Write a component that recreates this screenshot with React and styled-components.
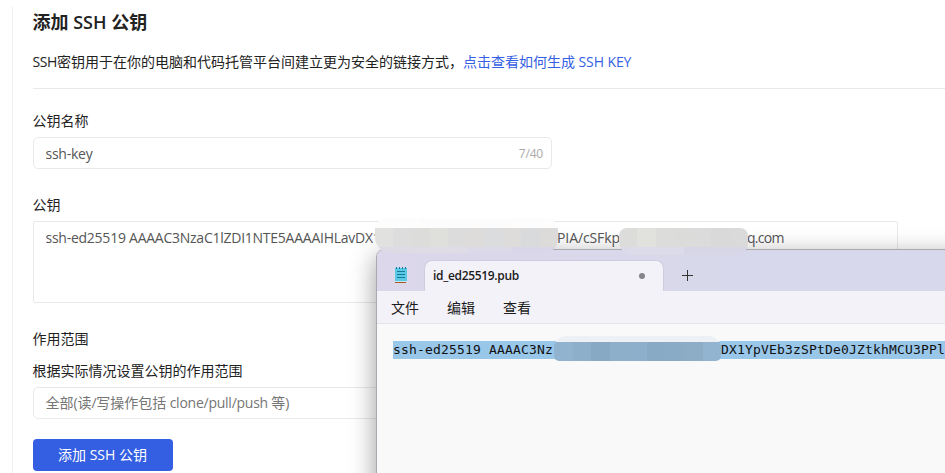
import React from 'react';
import styled, { createGlobalStyle } from 'styled-components';

const Global = createGlobalStyle`
  * { box-sizing: border-box; }
  body { margin: 0; background: #fff; overflow: hidden; }
`;
const Page = styled.div`
  position: relative;
  width: 945px;
  height: 473px;
  overflow: hidden;
  background: #fff;
  padding: 6px 0 0 12px;
  font: 14px/20px 'Open Sans', 'Noto Sans CJK SC', sans-serif;
  color: #222;
`;
const Settings = styled.main`
  height: 467px;
  border-left: 1px solid #f0f0f2;
  padding-left: 20px;
  display: flex;
  flex-direction: column;
  align-items: flex-start;
`;
const Latin = styled.span`
  font-family: 'Open Sans', sans-serif;
  font-size: ${(p) => p.$size || 14}px;
  letter-spacing: ${(p) => p.$gap ?? -0.25}px;
  font-weight: ${(p) => p.$weight || 'inherit'};
  white-space: pre;
`;
const Title = styled.h1`
  margin: 3px 0 0 -0.5px;
  height: 26px;
  font-size: 18px;
  line-height: 26px;
  font-weight: 700;
  white-space: nowrap;
`;
const Intro = styled.p`
  margin: 17px 0 0 -0.5px;
  height: 20px;
  white-space: nowrap;
`;
const HelpLink = styled.a`
  color: #3460e4;
`;
const Divider = styled.hr`
  width: 100%;
  height: 1px;
  margin: 16px 0 22px;
  border: 0;
  background: #e8e9eb;
`;
const Label = styled.label`
  height: 20px;
  margin: 0 0 ${(p) => p.$after || 6}px -0.5px;
  white-space: nowrap;
`;
const Field = styled.div`
  width: 519px;
  height: 32px;
  margin-bottom: ${(p) => p.$after}px;
  border: 1px solid #e8e9ea;
  border-radius: 5px;
  padding: ${(p) => p.$drop || 0}px 8px 0 11.5px;
  display: flex;
  align-items: center;
  justify-content: space-between;
  white-space: nowrap;
  color: ${(p) => p.$color || '#555'};
`;
const Counter = styled.span`
  font-size: 12px;
  letter-spacing: -0.2px;
  color: #aaa;
`;
const KeyArea = styled.div`
  width: 865px;
  height: 82px;
  margin-bottom: 26px;
  border: 1px solid #e6e8eb;
  border-radius: 2px;
  padding: 6px 11.5px;
  display: flex;
  color: #555;
`;
const KeyPart = styled.span`
  flex: none;
  width: ${(p) => p.$width}px;
  overflow: hidden;
`;
const Submit = styled.button`
  width: 140px;
  height: 32px;
  padding: 0 1px 0 0;
  border: 0;
  border-radius: 4px;
  background: #355fe3;
  color: #fff;
  font: 14px/32px 'Open Sans', 'Noto Sans CJK SC', sans-serif;
`;
const Notepad = styled.section`
  position: absolute;
  left: 376px;
  top: 249px;
  width: 640px;
  height: 300px;
  border: 1px solid #aaa9b0;
  border-radius: 8px 0 0 0;
  background: #f9f9f9;
  box-shadow: 0 7px 26px rgba(0, 0, 0, 0.4);
  overflow: hidden;
`;
const TabStrip = styled.header`
  height: 41px;
  padding: 10px 0 0 13px;
  display: flex;
  align-items: flex-start;
  background: linear-gradient(90deg, #dcd7eb 0, #d9d8eb 45%, #d7d8eb 60%);
`;
const AppIcon = styled.svg`
  width: 24px;
  height: 24px;
  margin-right: 10px;
`;
const Tab = styled.div`
  width: 240px;
  height: 31px;
  padding: 0 18px 0 8px;
  border: 1px solid #cfcce2;
  border-bottom: 0;
  border-radius: 8px 8px 0 0;
  background: #f4f2f9;
  display: flex;
  align-items: center;
  justify-content: space-between;
  font-size: 12px;
  color: #1b1b1b;
`;
const UnsavedDot = styled.i`
  width: 6px;
  height: 6px;
  border-radius: 50%;
  background: #858488;
`;
const PlusIcon = styled.svg`
  width: 11px;
  height: 11px;
  margin: 10px 0 0 18px;
`;
const MenuBar = styled.nav`
  height: 33px;
  padding: 7px 14px;
  display: flex;
  gap: 28px;
  border-bottom: 1px solid #e5e3ea;
  background: #f4f2f9;
  color: #1b1b1b;
  line-height: 20px;
`;
const Editor = styled.div`
  padding: 17px 0 0 16px;
`;
const Selection = styled.div`
  height: 18px;
  background: #99c7ea;
  color: #111;
  display: flex;
  gap: 168px;
  font: 13px/18px 'DejaVu Sans Mono', monospace;
  letter-spacing: 0.1735px;
  white-space: pre;
`;
const Mosaic = styled.div`
  position: absolute;
  left: ${(p) => p.$x}px;
  top: ${(p) => p.$y}px;
  width: ${(p) => p.$w}px;
  height: ${(p) => p.$h}px;
  border-radius: ${(p) => p.$radius};
  overflow: hidden;
  display: flex;
  flex-direction: column;
`;
const MosaicRow = styled.div`
  flex: none;
  height: ${(p) => p.$h}px;
  display: flex;
`;
const MosaicCell = styled.i`
  flex: 1 0 0;
  background: ${(p) => p.$c};
`;

const mosaics = [
  {
    x: 375, y: 218, w: 183, h: 35, radius: '12px 12px 14px 16px',
    rows: [
      [10, ['#fdfdfd', '#fcfcfc', '#fcfcfc', '#fdfdfd']],
      [19, ['#e1e1e0', '#dcdddc', '#dcdddb', '#dfdfdc', '#dbdcdb', '#dddcdb', '#dbdcdd', '#dddcda', '#d9dadc', '#dcdbd9']],
      [6, ['#dedbe7', '#dfdce8', '#dcd9e8', '#d9d6e7']],
    ],
  },
  {
    x: 619, y: 228, w: 129, h: 27, radius: '8px 8px 12px 14px',
    rows: [
      [19, ['#dcdcdb', '#e1e1de', '#dcdcdb', '#dbdbda', '#dbdbdb', '#d9d9da', '#dadada']],
      [8, ['#dcdbe9', '#dcdbe9', '#d7d6e7', '#d6d6e7']],
    ],
  },
  {
    x: 554, y: 336, w: 167, h: 25, radius: '12px 12px 5px 5px',
    rows: [
      [6, ['#edf1f5']],
      [19, ['#92b3cf', '#8dafca', '#87a9c3', '#8eafc9', '#8eafcb', '#89aac5', '#8aabc5', '#8dacc5', '#92b4d0']],
    ],
  },
];

export default function App() {
  return (
    <Page>
      <Global />
      <Settings>
        <Title>添加<Latin $size={18} $weight={600} $gap={0}> SSH </Latin>公钥</Title>
        <Intro>
          <Latin $gap={-0.4}>SSH</Latin>密钥用于在你的电脑和代码托管平台间建立更为安全的链接方式，
          <HelpLink>点击查看如何生成<Latin $gap={-0.1}> SSH KEY</Latin></HelpLink>
        </Intro>
        <Divider />
        <Label>公钥名称</Label>
        <Field $after={26} $drop={2}><Latin>ssh-key</Latin><Counter>7/40</Counter></Field>
        <Label>公钥</Label>
        <KeyArea>
          <KeyPart $width={511.5}><Latin>ssh-ed25519 AAAAC3NzaC1lZDI1NTE5AAAAIHLavDX1</Latin></KeyPart>
          <KeyPart $width={190}><Latin $gap={-0.1}>PIA/cSFkpr</Latin></KeyPart>
          <KeyPart $width={60}><Latin $gap={-0.7}>q.com</Latin></KeyPart>
        </KeyArea>
        <Label $after={12}>作用范围</Label>
        <Label>根据实际情况设置公钥的作用范围</Label>
        <Field $after={20} $color="#757575">
          <span>全部<Latin>(</Latin>读<Latin>/</Latin>写操作包括<Latin> clone/pull/push </Latin>等<Latin>)</Latin></span>
        </Field>
        <Submit>添加<Latin $gap={0}> SSH </Latin>公钥</Submit>
      </Settings>
      <Notepad>
        <TabStrip>
          <AppIcon viewBox="0 0 24 24">
            <path fill="#5bc8e4" d="M5 8h12v13H5z" />
            <path fill="#a85a20" d="M5 22h11v1H5z" />
            <path fill="#c7e9f3" d="M5 21h12v1H5z" />
            <path stroke="#137b9c" d="M7 11.500h8M7 14.500h8M7 17.500h8M6.500 7v2M9.500 7v2M12.500 7v2M15.500 7v2" />
          </AppIcon>
          <Tab><Latin $size={12} $weight={600} $gap={-0.33}>id_ed25519.pub</Latin><UnsavedDot /></Tab>
          <PlusIcon viewBox="0 0 11 11"><path stroke="#333" d="M0 5.500h11M5.500 0v11" /></PlusIcon>
        </TabStrip>
        <MenuBar><span>文件</span><span>编辑</span><span>查看</span></MenuBar>
        <Editor>
          <Selection><span>ssh-ed25519 AAAAC3Nz</span><span>DX1YpVEb3zSPtDe0JZtkhMCU3PPl</span></Selection>
        </Editor>
      </Notepad>
      {mosaics.map((m) => (
        <Mosaic key={m.x} $x={m.x} $y={m.y} $w={m.w} $h={m.h} $radius={m.radius}>
          {m.rows.map(([h, cells], r) => (
            <MosaicRow key={r} $h={h}>{cells.map((c, i) => <MosaicCell key={i} $c={c} />)}</MosaicRow>
          ))}
        </Mosaic>
      ))}
    </Page>
  );
}
